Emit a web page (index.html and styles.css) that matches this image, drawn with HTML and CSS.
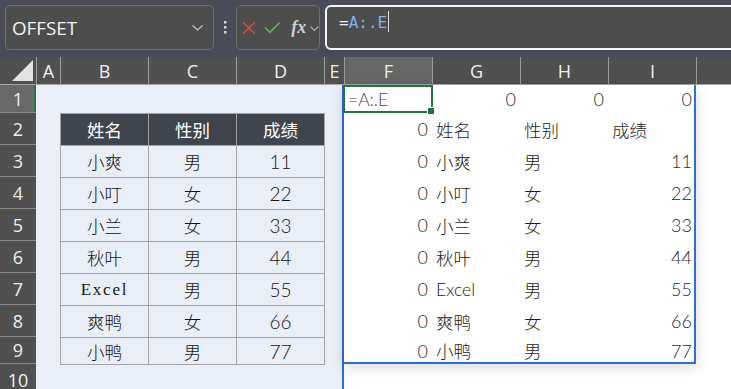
FILE: index.html
```html
<!DOCTYPE html>
<html lang="zh-CN">
<head>
    <meta charset="UTF-8">
    <title>OFFSET</title>
    <link rel="stylesheet" href="styles.css">
</head>
<body>
    <div class="toolbar">
        <div class="name-box">
            <span>OFFSET</span>
            <svg class="chevron" width="11" height="6" viewBox="0 0 11 6"><path d="M0.5 0.5L5.5 5L10.5 0.5" fill="none" stroke="#c4c4c4" stroke-width="1.2"/></svg>
        </div>
        <div class="grip">
            <svg width="3" height="13" viewBox="0 0 3 13"><rect x="0" y="0" width="2.5" height="2.5" fill="#d6d6d6"/><rect x="0" y="5" width="2.5" height="2.5" fill="#d6d6d6"/><rect x="0" y="10" width="2.5" height="2.5" fill="#d6d6d6"/></svg>
        </div>
        <div class="fx-box">
            <svg class="cancel" width="14" height="14" viewBox="0 0 14 14"><path d="M1 1L13 13M13 1L1 13" stroke="#e0474c" stroke-width="1.5"/></svg>
            <svg class="enter" width="17" height="13" viewBox="0 0 17 13"><path d="M1 6.5L6 11.5L16 1.5" fill="none" stroke="#5cb85c" stroke-width="1.5"/></svg>
            <span class="fx">fx</span>
            <svg class="chevron small" width="9" height="5" viewBox="0 0 9 5"><path d="M0.5 0.5L4.5 4.5L8.5 0.5" fill="none" stroke="#b8b8b8" stroke-width="1.1"/></svg>
        </div>
        <div class="formula">
            <span class="eq">=</span><span class="ref">A:.E</span><span class="caret"></span>
        </div>
    </div>

    <div class="sheet">
        <div class="corner">
            <svg width="21" height="21" viewBox="0 0 21 21"><path d="M21 0L21 21L0 21Z" fill="#e4e4e4"/></svg>
        </div>
        <div class="col-head">A</div>
        <div class="col-head">B</div>
        <div class="col-head">C</div>
        <div class="col-head">D</div>
        <div class="col-head">E</div>
        <div class="col-head selected">F</div>
        <div class="col-head">G</div>
        <div class="col-head">H</div>
        <div class="col-head">I</div>
        <div class="col-head"></div>

        <div class="row-head selected">1</div>
        <div class="row-head">2</div>
        <div class="row-head">3</div>
        <div class="row-head">4</div>
        <div class="row-head">5</div>
        <div class="row-head">6</div>
        <div class="row-head">7</div>
        <div class="row-head">8</div>
        <div class="row-head">9</div>
        <div class="row-head last">10</div>

        <!-- pasted picture of B2:D9 -->
        <div class="picture">
            <div class="pic-table">
                <div class="th">姓名</div><div class="th">性别</div><div class="th">成绩</div>
                <div class="td">小爽</div><div class="td">男</div><div class="td num">11</div>
                <div class="td">小叮</div><div class="td">女</div><div class="td num">22</div>
                <div class="td">小兰</div><div class="td">女</div><div class="td num">33</div>
                <div class="td">秋叶</div><div class="td">男</div><div class="td num">44</div>
                <div class="td latin">Excel</div><div class="td">男</div><div class="td num">55</div>
                <div class="td">爽鸭</div><div class="td">女</div><div class="td num">66</div>
                <div class="td">小鸭</div><div class="td">男</div><div class="td num">77</div>
            </div>
        </div>

        <!-- spilled result of =A:.E -->
        <div class="spill">
            <div class="cell formula-text">=A:.E</div><div class="cell num">0</div><div class="cell num">0</div><div class="cell num">0</div>
            <div class="cell num">0</div><div class="cell">姓名</div><div class="cell">性别</div><div class="cell">成绩</div>
            <div class="cell num">0</div><div class="cell">小爽</div><div class="cell">男</div><div class="cell num">11</div>
            <div class="cell num">0</div><div class="cell">小叮</div><div class="cell">女</div><div class="cell num">22</div>
            <div class="cell num">0</div><div class="cell">小兰</div><div class="cell">女</div><div class="cell num">33</div>
            <div class="cell num">0</div><div class="cell">秋叶</div><div class="cell">男</div><div class="cell num">44</div>
            <div class="cell num">0</div><div class="cell">Excel</div><div class="cell">男</div><div class="cell num">55</div>
            <div class="cell num">0</div><div class="cell">爽鸭</div><div class="cell">女</div><div class="cell num">66</div>
            <div class="cell num">0</div><div class="cell">小鸭</div><div class="cell">男</div><div class="cell num">77</div>
        </div>

        <div class="active-cell"></div>
    </div>
</body>
</html>
```

FILE: styles.css
```css
* {
    margin: 0;
    padding: 0;
    box-sizing: border-box;
}

body {
    width: 731px;
    height: 389px;
    overflow: hidden;
    background: #fff;
    font-family: Lato, "Noto Sans CJK SC", sans-serif;
}

/* ---------- formula bar ---------- */

.toolbar {
    height: 57px;
    background: #494c57;
    display: flex;
    align-items: flex-start;
    padding: 5px 0 0 5px;
    overflow: hidden;
}

.name-box {
    width: 209px;
    height: 45px;
    background: #4d4d4d;
    border: 1px solid #6e6e6e;
    border-radius: 5px;
    display: flex;
    align-items: center;
    justify-content: space-between;
    padding: 0 10px 0 6px;
    color: #f2f2f2;
    font-family: "Open Sans", sans-serif;
    font-size: 18.8px;
}

.grip {
    width: 22px;
    height: 45px;
    display: flex;
    align-items: center;
    justify-content: center;
}

.fx-box {
    width: 84px;
    height: 45px;
    background: #4d4d4d;
    border: 1px solid #6e6e6e;
    border-radius: 5px;
    display: flex;
    align-items: center;
    padding-left: 5px;
}

.enter {
    margin-left: 8px;
}

.fx {
    margin-left: 11px;
    color: #cfcfcf;
    font-family: "Liberation Serif", serif;
    font-style: italic;
    font-weight: bold;
    font-size: 18px;
}

.chevron.small {
    margin-left: 4px;
    margin-top: 2px;
}

.formula {
    flex: 1;
    margin-left: 5px;
    margin-right: -10px;
    height: 45px;
    background: #4d4d4d;
    border: 2px solid #f5f5f5;
    border-radius: 6px;
    display: flex;
    align-items: flex-start;
    padding: 5px 0 0 12px;
    font-family: "DejaVu Sans Mono", monospace;
    font-size: 16px;
    line-height: 22px;
}

.eq {
    color: #ececec;
}

.ref {
    color: #7fb0f2;
}

.caret {
    width: 1px;
    height: 21px;
    margin-top: -1px;
    margin-left: 1px;
    background: #d8d8d8;
}

/* ---------- grid ---------- */

.sheet {
    height: 332px;
    display: grid;
    grid-template-columns: 36px 24px 88px 88px 88px 20px 88px 88px 88px 88px 1fr;
    grid-template-rows: 28px 28px repeat(7, 32px) 27px 1fr;
    background: #fff;
}

.corner {
    background: #505050;
    display: flex;
    align-items: flex-end;
    justify-content: flex-end;
    padding: 0 3px 3px 0;
    border-bottom: 1px solid #a6a6a6;
}

.col-head {
    background: #505050;
    color: #efefef;
    font-family: "Open Sans", sans-serif;
    font-size: 18px;
    display: flex;
    align-items: center;
    justify-content: center;
    border-left: 1px solid #9c9c9c;
    border-bottom: 1px solid #a6a6a6;
}

.col-head.selected {
    background: #676767;
}

.row-head {
    grid-column: 1;
    background: #505050;
    color: #efefef;
    font-family: "Open Sans", sans-serif;
    font-size: 18px;
    display: flex;
    align-items: center;
    justify-content: center;
    border-bottom: 1px solid #878787;
}

.row-head.selected {
    background: #696969;
    box-shadow: inset -2px 0 0 #217346;
}

.row-head.last {
    align-items: flex-start;
    line-height: 32px;
    border-bottom: none;
}

/* ---------- picture ---------- */

.picture {
    grid-column: 2 / 7;
    grid-row: 2 / 12;
    background: #e9eef7;
    box-shadow: inset -2px 0 0 #2f6fd1;
    padding: 28px 0 0 24px;
    z-index: 1;
}

.pic-table {
    display: grid;
    grid-template-columns: repeat(3, 88px);
    grid-template-rows: repeat(7, 32px) 27px;
    border-top: 1px solid #a2a3ab;
    border-left: 1px solid #a2a3ab;
    width: 265px;
}

.th,
.td {
    display: flex;
    align-items: center;
    justify-content: center;
    border-right: 1px solid #a2a3ab;
    border-bottom: 1px solid #a2a3ab;
    font-family: "Noto Sans CJK SC", sans-serif;
    font-size: 17.5px;
}

.th {
    background: #40444d;
    color: #fff;
}

.td {
    color: #151515;
    font-weight: 300;
}

.td.num {
    font-family: Lato, sans-serif;
    font-size: 19px;
}

.td.latin {
    font-family: "Liberation Serif", serif;
    font-weight: 400;
    font-size: 17px;
    letter-spacing: 1.8px;
}

/* ---------- spill range ---------- */

.spill {
    grid-column: 7 / 11;
    grid-row: 2 / 11;
    display: grid;
    grid-template-columns: repeat(4, 88px);
    grid-template-rows: 28px repeat(7, 32px) 27px;
    box-shadow: inset -2px -2px 0 #2f6fd1, 0 3px 12px rgba(0, 0, 0, 0.16);
    z-index: 2;
}

.cell {
    display: flex;
    align-items: center;
    padding: 0 4px;
    color: #1c1c1c;
    font-size: 17.5px;
    font-weight: 300;
    white-space: nowrap;
}

.cell.num {
    justify-content: flex-end;
    font-size: 18px;
    color: #2a2a2a;
}

.cell.formula-text {
    color: #444;
}

.active-cell {
    grid-column: 7 / 8;
    grid-row: 2 / 3;
    margin: 0 -1px 0 -1px;
    border: 2px solid #217346;
    position: relative;
    z-index: 3;
}

.active-cell::after {
    content: "";
    position: absolute;
    right: -4px;
    bottom: -4px;
    width: 6px;
    height: 6px;
    background: #217346;
    border: 1px solid #fff;
}
```
